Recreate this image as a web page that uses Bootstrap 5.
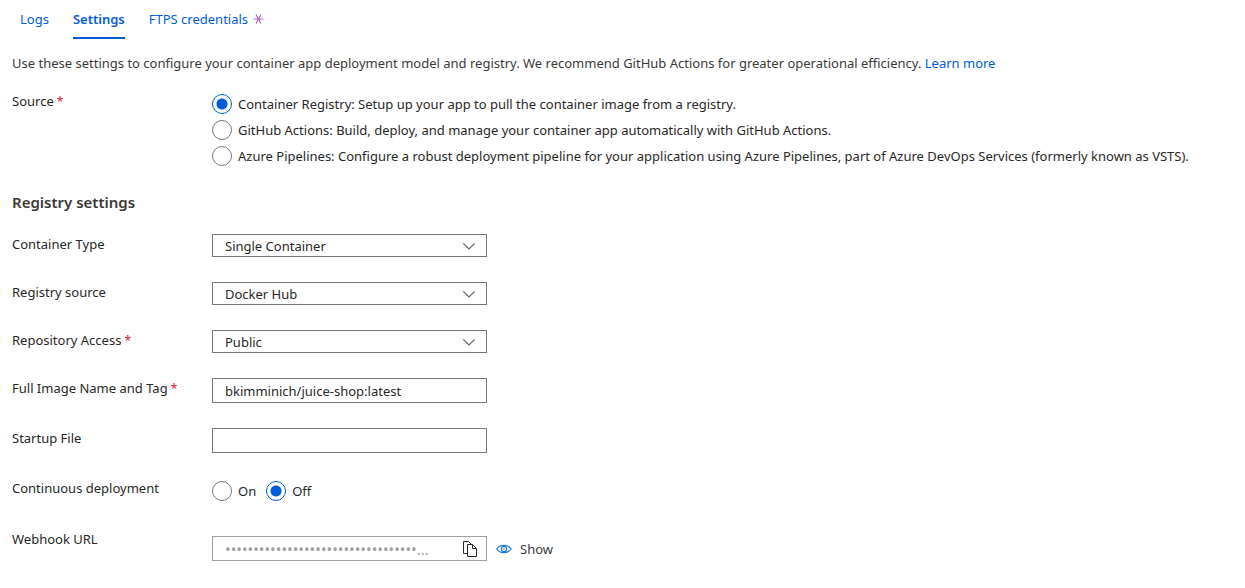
<!DOCTYPE html>
<html lang="en">
<head>
<meta charset="utf-8">
<meta name="viewport" content="width=device-width, initial-scale=1">
<title>Deployment Center</title>
<link href="https://cdn.jsdelivr.net/npm/bootstrap@5.3.0/dist/css/bootstrap.min.css" rel="stylesheet">
<style>
  body { font-family: "Noto Sans", sans-serif; font-size: 13px; line-height: 20px; color: #292827; }
  a { color: #015cda; }
  .page { padding: 9px 12px 24px; }
  .tabs { gap: 24px; padding-left: 8px; }
  .tabs .nav-link { padding: 0 0 8px; color: #015cda; border-bottom: 2px solid transparent; }
  .tabs .nav-link.active { font-weight: 600; border-color: #015cda; }
  .intro { margin: 14px 0 18px; color: #3b3a39; }
  .settings-title { font-size: 15px; line-height: 24px; font-weight: 600; color: #3b3a39; margin: 21px 0 20px; }
  .fields { gap: 25px; }
  .field-label { flex: 0 0 200px; }
  .req { color: #e81123; font-size: 12px; line-height: 16px; margin-left: 3px; }
  .choice { gap: 6px; min-height: 26px; }
  .choice .form-check-input { flex: none; width: 20px; height: 20px; margin: 0; border: 1px solid #797775; background: #fff; box-shadow: none; }
  .choice .form-check-input:checked { border-color: #015cda; background: radial-gradient(circle, #015cda 5px, transparent 6px) center / 20px 20px no-repeat; }
  .switch-options { gap: 10px; }
  .box { width: 275px; max-width: 100%; height: 25px; padding: 0 12px; font-size: 13px; line-height: 20px; color: #292827; border: 1px solid #797775; border-radius: 0; box-shadow: none; }
  select.box { height: 23px; background-size: 14px 14px; background-position: right 10px center;
    background-image: url("data:image/svg+xml,%3Csvg xmlns='http://www.w3.org/2000/svg' viewBox='0 0 14 14'%3E%3Cpath d='M1.3 4.3 7 10l5.700-5.700' fill='none' stroke='%23605e5c' stroke-width='1.100'/%3E%3C/svg%3E"); }
  .webhook { padding-top: 7px; gap: 9px; }
  .secret { width: 275px; height: 25px; border: 1px solid #a19f9d; }
  .secret input { min-width: 0; height: 23px; padding: 0 0 0 12px; color: #a19f9d; font-size: 15px; outline: 0; }
  .secret button { width: 32px; }
  .show-btn { gap: 8px; font-size: 13px; line-height: 20px; color: #3b3a39; }
</style>
</head>
<body>
<main class="page">
  <nav class="nav tabs" aria-label="Deployment">
    <a class="nav-link" href="#logs">Logs</a>
    <a class="nav-link active" aria-current="page" href="#settings">Settings</a>
    <a class="nav-link d-flex align-items-center" href="#ftps">FTPS credentials
      <svg class="ms-1" width="13" height="12" viewBox="0 0 13 12" fill="none" stroke="#a662b8" stroke-width="1.100" aria-hidden="true"><path d="M1.500 6h10M4 1.500l5 9M9 1.500l-5 9"/></svg>
    </a>
  </nav>

  <p class="intro">Use these settings to configure your container app deployment model and registry. We recommend GitHub Actions for greater operational efficiency. <a class="text-decoration-none" href="#learn">Learn more</a></p>

  <div class="d-flex flex-wrap flex-sm-nowrap" role="radiogroup" aria-labelledby="source-label">
    <div class="field-label" id="source-label">Source<span class="req">*</span></div>
    <div>
      <div class="choice d-flex align-items-center"><input class="form-check-input" type="radio" name="source" id="src-registry" checked><label for="src-registry">Container Registry: Setup up your app to pull the container image from a registry.</label></div>
      <div class="choice d-flex align-items-center"><input class="form-check-input" type="radio" name="source" id="src-github"><label for="src-github">GitHub Actions: Build, deploy, and manage your container app automatically with GitHub Actions.</label></div>
      <div class="choice d-flex align-items-center"><input class="form-check-input" type="radio" name="source" id="src-azure"><label for="src-azure">Azure Pipelines: Configure a robust deployment pipeline for your application using Azure Pipelines, part of Azure DevOps Services (formerly known as VSTS).</label></div>
    </div>
  </div>

  <h2 class="settings-title">Registry settings</h2>

  <div class="fields d-flex flex-column">
    <div class="d-flex flex-wrap flex-sm-nowrap">
      <label class="field-label" for="type">Container Type</label>
      <select class="form-select box" id="type"><option>Single Container</option><option>Docker Compose</option></select>
    </div>
    <div class="d-flex flex-wrap flex-sm-nowrap">
      <label class="field-label" for="registry">Registry source</label>
      <select class="form-select box" id="registry"><option>Docker Hub</option><option>Private Registry</option></select>
    </div>
    <div class="d-flex flex-wrap flex-sm-nowrap">
      <label class="field-label" for="access">Repository Access<span class="req">*</span></label>
      <select class="form-select box" id="access"><option>Public</option><option>Private</option></select>
    </div>
    <div class="d-flex flex-wrap flex-sm-nowrap">
      <label class="field-label" for="image">Full Image Name and Tag<span class="req">*</span></label>
      <input class="form-control box" type="text" id="image" value="bkimminich/juice-shop:latest">
    </div>
    <div class="d-flex flex-wrap flex-sm-nowrap">
      <label class="field-label" for="startup">Startup File</label>
      <input class="form-control box" type="text" id="startup">
    </div>
    <div class="d-flex flex-wrap flex-sm-nowrap" role="radiogroup" aria-labelledby="cd-label">
      <div class="field-label" id="cd-label">Continuous deployment</div>
      <div class="switch-options d-flex">
        <div class="choice d-flex align-items-center"><input class="form-check-input" type="radio" name="cd" id="cd-on"><label for="cd-on">On</label></div>
        <div class="choice d-flex align-items-center"><input class="form-check-input" type="radio" name="cd" id="cd-off" checked><label for="cd-off">Off</label></div>
      </div>
    </div>
    <div class="d-flex flex-wrap flex-sm-nowrap">
      <label class="field-label" for="webhook">Webhook URL</label>
      <div class="webhook d-flex align-items-center">
        <div class="secret d-flex">
          <input class="flex-grow-1 border-0 bg-transparent" type="text" id="webhook" readonly value="••••••••••••••••••••••••••••••••••…">
          <button type="button" class="btn p-0 border-0 rounded-0 d-flex align-items-center justify-content-center" aria-label="Copy webhook URL">
            <svg width="16" height="16" viewBox="0 0 16 16" fill="none" stroke="#292827"><path d="M5.500 12.500h-4v-12h5l3 3M5.500 3.500h5l4 4v8h-9zM10.500 3.500v4h4"/></svg>
          </button>
        </div>
        <button type="button" class="show-btn btn p-0 border-0 d-flex align-items-center">
          <svg width="16" height="10" viewBox="0 0 16 10" fill="none" stroke="#1a78cc" stroke-width="1.200"><path d="M.8 5C4 .2 12 .2 15.200 5 12 9.800 4 9.800.8 5z"/><circle cx="8" cy="5" r="2.600"/><circle cx="8" cy="5" r=".8" fill="#1a78cc" stroke="none"/></svg>
          Show
        </button>
      </div>
    </div>
  </div>
</main>
<script src="https://cdn.jsdelivr.net/npm/bootstrap@5.3.0/dist/js/bootstrap.bundle.min.js"></script>
</body>
</html>
